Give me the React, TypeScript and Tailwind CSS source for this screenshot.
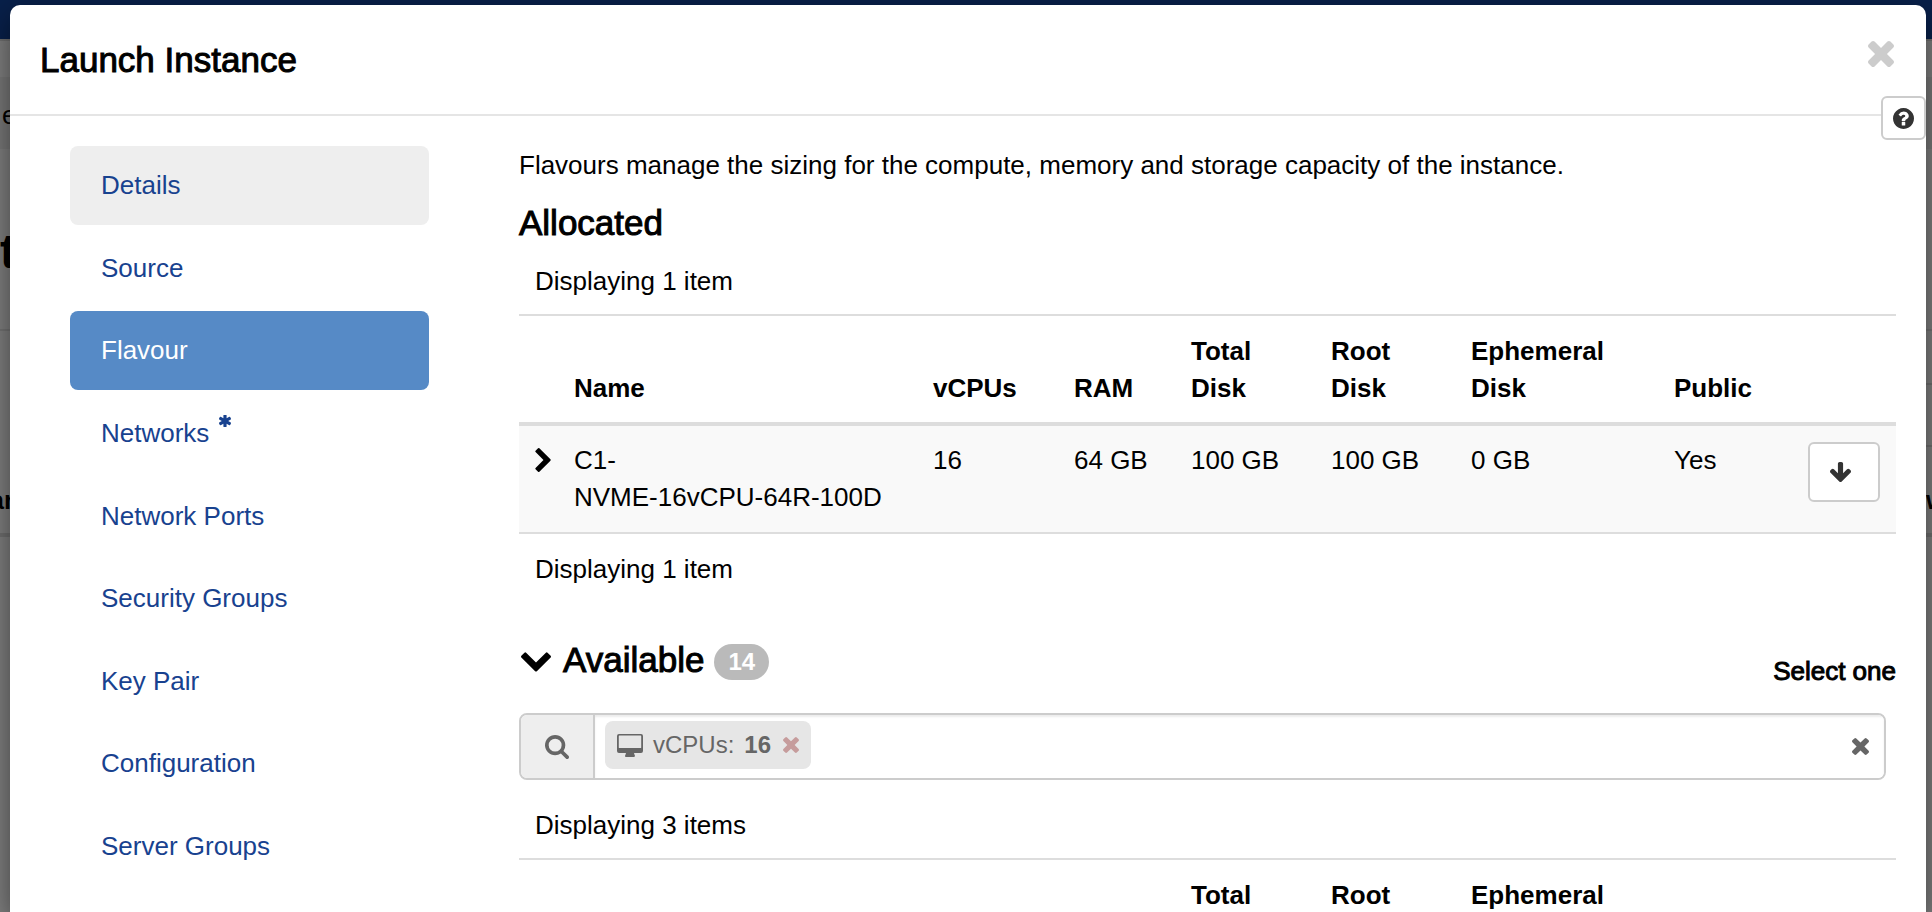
import React from 'react';

interface Flavour {
  series: string;
  size: string;
  vcpus: number;
  ram: string;
  totalDisk: string;
  rootDisk: string;
  ephemeralDisk: string;
  isPublic: boolean;
}

interface IconProps {
  className?: string;
}

const steps = [
  { label: 'Details', hovered: true },
  { label: 'Source' },
  { label: 'Flavour', active: true },
  { label: 'Networks', required: true },
  { label: 'Network Ports' },
  { label: 'Security Groups' },
  { label: 'Key Pair' },
  { label: 'Configuration' },
  { label: 'Server Groups' },
];

const allocated: Flavour[] = [
  {
    series: 'C1-',
    size: 'NVME-16vCPU-64R-100D',
    vcpus: 16,
    ram: '64 GB',
    totalDisk: '100 GB',
    rootDisk: '100 GB',
    ephemeralDisk: '0 GB',
    isPublic: true,
  },
];

function TimesIcon({ className }: IconProps) {
  return (
    <svg className={className} fill="currentColor" viewBox="302 366 1188 1188" aria-hidden="true">
      <path d="M1490 1322q0 40-28 68l-136 136q-28 28-68 28t-68-28l-294-294-294 294q-28 28-68 28t-68-28l-136-136q-28-28-28-68t28-68l294-294-294-294q-28-28-28-68t28-68l136-136q28-28 68-28t68 28l294 294 294-294q28-28 68-28t68 28l136 136q28 28 28 68t-28 68l-294 294 294 294q28 28 28 68z" />
    </svg>
  );
}

function ChevronRightIcon({ className }: IconProps) {
  return (
    <svg className={className} fill="currentColor" viewBox="346 26 1036 1612" aria-hidden="true">
      <path d="M1363 877l-742 742q-19 19-45 19t-45-19l-166-166q-19-19-19-45t19-45l531-531-531-531q-19-19-19-45t19-45l166-166q19-19 45-19t45 19l742 742q19 19 19 45t-19 45z" />
    </svg>
  );
}

function ChevronDownIcon({ className }: IconProps) {
  return (
    <svg className={className} fill="currentColor" viewBox="90 533 1612 1036" aria-hidden="true">
      <path d="M1683 808l-742 741q-19 19-45 19t-45-19l-742-741q-19-19-19-45.5t19-45.5l166-165q19-19 45-19t45 19l531 531 531-531q19-19 45-19t45 19l166 165q19 19 19 45.5t-19 45.5z" />
    </svg>
  );
}

function ArrowDownIcon({ className }: IconProps) {
  return (
    <svg className={className} fill="currentColor" viewBox="117 128 1558 1483" aria-hidden="true">
      <path d="M1675 832q0 53-37 90l-651 652q-39 37-91 37-53 0-90-37l-651-652q-38-36-38-90 0-53 38-91l74-75q39-37 91-37 53 0 90 37l294 294v-704q0-52 38-90t90-38h128q52 0 90 38t38 90v704l294-294q37-37 90-37 52 0 91 37l75 75q37 39 37 91z" />
    </svg>
  );
}

function QuestionCircleIcon({ className }: IconProps) {
  return (
    <svg className={className} fill="currentColor" viewBox="128 128 1536 1536" aria-hidden="true">
      <path d="M1024 1376v-192q0-14-9-23t-23-9h-192q-14 0-23 9t-9 23v192q0 14 9 23t23 9h192q14 0 23-9t9-23zm256-672q0-88-55.5-163t-138.5-116-170-41q-243 0-371 213-15 24 8 42l132 100q7 6 19 6 16 0 25-12 53-68 86-92 34-24 86-24 48 0 85.5 26t37.5 59q0 38-20 61t-68 45q-63 28-115.5 86.5t-52.5 125.5v36q0 14 9 23t23 9h192q14 0 23-9t9-23q0-19 21.5-49.5t54.5-49.5q32-18 49-28.5t46-35 44.5-48 28-60.5 12.5-81zm384 192q0 209-103 385.5t-279.5 279.5-385.5 103-385.5-103-279.5-279.5-103-385.5 103-385.5 279.5-279.5 385.5-103 385.5 103 279.5 279.5 103 385.5z" />
    </svg>
  );
}

function SearchIcon({ className }: IconProps) {
  return (
    <svg className={className} fill="currentColor" viewBox="64 128 1664 1664" aria-hidden="true">
      <path d="M1216 832q0-185-131.5-316.5t-316.5-131.5-316.5 131.5-131.5 316.5 131.5 316.5 316.5 131.5 316.5-131.5 131.5-316.5zm512 832q0 52-38 90t-90 38q-54 0-90-38l-343-342q-179 124-399 124-143 0-273.5-55.5t-225-150-150-225-55.5-273.5 55.5-273.5 150-225 225-150 273.5-55.5 273.5 55.5 225 150 150 225 55.5 273.5q0 220-124 399l343 343q37 37 37 90z" />
    </svg>
  );
}

function AsteriskIcon({ className }: IconProps) {
  return (
    <svg className={className} fill="currentColor" viewBox="180 180 1432 1432" aria-hidden="true">
      <path d="M1546 1050q46 26 59.5 77.5t-12.5 97.5l-64 110q-26 46-77.5 59.5t-97.5-12.5l-266-153v307q0 52-38 90t-90 38h-128q-52 0-90-38t-38-90v-307l-266 153q-46 26-97.5 12.5t-77.5-59.5l-64-110q-26-46-12.5-97.5t59.5-77.5l266-154-266-154q-46-26-59.5-77.5t12.5-97.5l64-110q26-46 77.5-59.5t97.5 12.5l266 153v-307q0-52 38-90t90-38h128q52 0 90 38t38 90v307l266-153q46-26 97.5-12.5t77.5 59.5l64 110q26 46 12.5 97.5t-59.5 77.5l-266 154z" />
    </svg>
  );
}

function DesktopIcon({ className }: IconProps) {
  return (
    <svg className={className} fill="currentColor" viewBox="0 0 26 23" aria-hidden="true">
      <path
        fillRule="evenodd"
        d="M2 0h22a2 2 0 0 1 2 2v15a2 2 0 0 1-2 2h-7l.6 2q.4.4.4 1t-1 1H9q-1 0-1-.8t.4-1.2L9 19H2a2 2 0 0 1-2-2V2a2 2 0 0 1 2-2zm.4 1.6a.6.6 0 0 0-.6.6v11.2q0 .6.6.6h21.2q.6 0 .6-.6V2.2a.6.6 0 0 0-.6-.6z"
      />
    </svg>
  );
}

function FlavourTable({ flavours, label }: { flavours: Flavour[]; label: string }) {
  return (
    <table className="w-full table-fixed border-y-2 border-[#ddd] text-left" aria-label={label}>
      <colgroup>
        <col className="w-[39px]" />
        <col />
        <col className="w-[141px]" />
        <col className="w-[117px]" />
        <col className="w-[140px]" />
        <col className="w-[140px]" />
        <col className="w-[203px]" />
        <col className="w-[134px]" />
        <col className="w-[104px]" />
      </colgroup>
      <thead>
        <tr className="border-b-4 border-[#ddd] align-bottom">
          <td />
          <th className="px-4 pt-[17px] pb-[15px]">Name</th>
          <th className="px-4 pt-[17px] pb-[15px]">vCPUs</th>
          <th className="px-4 pt-[17px] pb-[15px]">RAM</th>
          <th className="px-4 pt-[17px] pb-[15px]">Total Disk</th>
          <th className="px-4 pt-[17px] pb-[15px]">Root Disk</th>
          <th className="px-4 pt-[17px] pb-[15px]">Ephemeral Disk</th>
          <th className="px-4 pt-[17px] pb-[15px]">Public</th>
          <td />
        </tr>
      </thead>
      <tbody>
        {flavours.map((flavour) => (
          <tr key={flavour.size} className="bg-[#f9f9f9] align-top">
            <td className="py-4 pl-4">
              <button type="button" className="block py-1.5" aria-label={`Show details of ${flavour.size}`}>
                <ChevronRightIcon className="h-6 w-4" />
              </button>
            </td>
            <td className="p-4">
              {flavour.series}
              <wbr />
              <span className="whitespace-nowrap">{flavour.size}</span>
            </td>
            <td className="p-4">{flavour.vcpus}</td>
            <td className="p-4">{flavour.ram}</td>
            <td className="p-4">{flavour.totalDisk}</td>
            <td className="p-4">{flavour.rootDisk}</td>
            <td className="p-4">{flavour.ephemeralDisk}</td>
            <td className="p-4">{flavour.isPublic ? 'Yes' : 'No'}</td>
            <td className="p-4">
              <button
                type="button"
                className="flex h-[60px] w-[72px] items-center justify-center rounded-md border-2 border-[#ccc] bg-white pr-2 text-[#333]"
                aria-label={`Remove ${flavour.size}`}
              >
                <ArrowDownIcon className="h-5 w-[21px]" />
              </button>
            </td>
          </tr>
        ))}
      </tbody>
    </table>
  );
}

// The instances page, dimmed behind the dialog
function PageBehind() {
  return (
    <div className="absolute inset-0 overflow-hidden bg-[#7f7f7f]" aria-hidden="true">
      <div className="h-[41px] border-b-2 border-[#6f6f6f] bg-[#08204a]" />
      <div className="mt-9 h-[72px] bg-[#787878] pt-5 pl-0.5">e</div>
      <div className="h-[182px] border-b-2 border-[#737373] pt-[84px] text-5xl leading-[37px] font-bold">t</div>
      <div className="flex h-[206px] justify-between border-b-4 border-[#6f6f6f] font-bold">
        <div className="flex w-3.5 items-end justify-end pb-3.5">ar</div>
        <div className="flex w-1.5 flex-col pb-3.5">
          <div className="h-[54px] border-b-2 border-[#6f6f6f]" />
          <div className="h-[62px] border-b-2 border-[#6f6f6f]" />
          <div className="mt-auto">w</div>
        </div>
      </div>
    </div>
  );
}

function App() {
  return (
    <div className="relative min-h-screen overflow-hidden font-['Liberation_Sans',Arial,sans-serif] text-[26px] leading-[37px] text-black">
      <PageBehind />
      <div
        role="dialog"
        aria-labelledby="dialog-title"
        className="relative mt-[5px] mr-1.5 ml-2.5 h-[calc(100vh-5px)] overflow-hidden rounded-t-[10px] bg-white shadow-[0_10px_30px_rgba(0,0,0,0.5)]"
      >
        <div className="flex items-start justify-between border-b-2 border-[#e5e5e5] pt-9 pr-8 pb-9 pl-[30px]">
          <h1 id="dialog-title" className="text-[35px] [-webkit-text-stroke:1px]">
            Launch Instance
          </h1>
          <button type="button" className="text-[#ccc]" aria-label="Close">
            <TimesIcon className="size-[26px]" />
          </button>
        </div>
        <button
          type="button"
          className="absolute top-[91px] right-0 flex h-11 w-[45px] items-center justify-center rounded-md border-2 border-[#ccc] bg-white text-[#333]"
          aria-label="Help"
        >
          <QuestionCircleIcon className="size-[21px]" />
        </button>

        <div className="flex items-start gap-[90px] pt-[30px] pr-[30px] pl-[60px]">
          <nav className="w-[359px] shrink-0">
            <ul className="flex h-[740px] flex-col justify-between">
              {steps.map((step) => (
                <li key={step.label}>
                  <a
                    href="#"
                    aria-current={step.active ? 'step' : undefined}
                    className={
                      step.active
                        ? 'flex h-[79px] items-center rounded-lg bg-[#568ac6] px-[31px] text-white'
                        : step.hovered
                          ? 'flex h-[79px] items-center rounded-lg bg-[#eee] px-[31px] text-[#18428f]'
                          : 'flex h-[79px] items-center rounded-lg px-[31px] text-[#18428f]'
                    }
                  >
                    {step.label}
                    {step.required && <AsteriskIcon className="mb-6 ml-2.5 size-3" />}
                  </a>
                </li>
              ))}
            </ul>
          </nav>

          <main className="min-w-0 flex-1 pt-px">
            <p>Flavours manage the sizing for the compute, memory and storage capacity of the instance.</p>
            <h2 className="mt-5 text-[35px] [-webkit-text-stroke:1px]">Allocated</h2>
            <p className="mt-[22px] mb-3.5 px-4">Displaying 1 item</p>
            <FlavourTable flavours={allocated} label="Allocated flavours" />
            <p className="mt-[17px] px-4">Displaying 1 item</p>

            <div className="mt-[50px] flex items-start justify-between">
              <h2 className="flex items-center text-[35px] [-webkit-text-stroke:1px]">
                <button type="button" className="mt-1.5 mr-3 ml-0.5" aria-label="Collapse available flavours">
                  <ChevronDownIcon className="h-5 w-[30px]" />
                </button>
                Available
                <span className="mt-1.5 ml-2.5 flex h-9 items-center rounded-full bg-[#bababa] px-3.5 text-2xl font-bold text-white [-webkit-text-stroke:0]">
                  14
                </span>
              </h2>
              <span className="pt-[15px] [-webkit-text-stroke:1px]">Select one</span>
            </div>

            <div className="mt-[23px] mr-2.5 flex h-[67px] overflow-hidden rounded-lg border-2 border-[#ccc] text-2xl text-[#666]">
              <label htmlFor="flavour-search" className="flex w-[74px] shrink-0 items-center justify-center border-r-2 border-[#ccc] bg-[#eee]">
                <SearchIcon className="size-6" />
              </label>
              <div className="flex flex-1 items-start bg-white pr-[15px] pl-2.5 shadow-[inset_0_2px_2px_rgba(0,0,0,0.08)]">
                <span className="mt-1.5 flex h-12 items-center rounded-lg bg-[#e6e6e6] px-3">
                  <DesktopIcon className="mr-2.5 h-[23px] w-[26px]" />
                  vCPUs:
                  <b className="ml-2.5">16</b>
                  <button type="button" className="ml-3 text-[#c69c9c]" aria-label="Remove vCPUs filter">
                    <TimesIcon className="size-4" />
                  </button>
                </span>
                <input id="flavour-search" type="text" className="h-full min-w-0 flex-1 px-3 outline-none" />
                <button type="button" className="self-center" aria-label="Clear filters">
                  <TimesIcon className="size-[17px]" />
                </button>
              </div>
            </div>

            <p className="mt-[27px] mb-3.5 px-4">Displaying 3 items</p>
            <FlavourTable flavours={[]} label="Available flavours" />
          </main>
        </div>
      </div>
    </div>
  );
}

export default App;
